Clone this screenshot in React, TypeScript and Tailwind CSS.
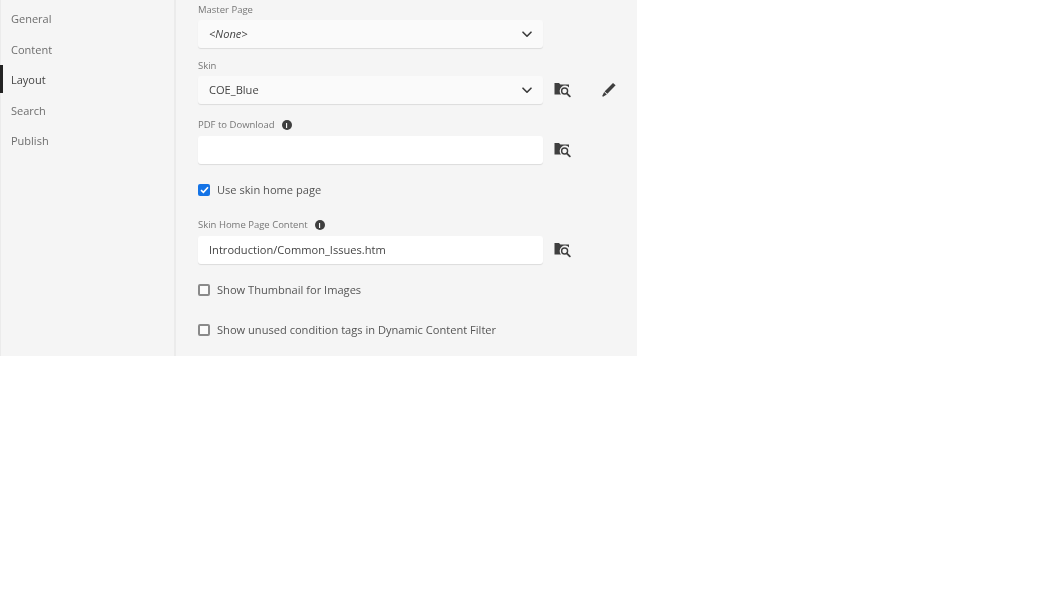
import React from "react";

const font = { fontFamily: '"Open Sans", "Noto Sans", sans-serif' };

function Chevron() {
  return (
    <svg width="10" height="7" viewBox="0 0 10 7" className="text-[#3a3a3a]">
      <path d="M1 1.2 L5 5.2 L9 1.2" fill="none" stroke="currentColor" strokeWidth="1.6" strokeLinecap="round" strokeLinejoin="round" />
    </svg>
  );
}

function FolderSearch() {
  return (
    <svg width="17" height="16" viewBox="0 0 17 16" className="text-[#3f3f3f]">
      <path d="M0.5 1 H5 L6.4 2.6 H15 V5.4 A5 5 0 0 0 7 12.5 H0.5 Z" fill="currentColor" />
      <circle cx="10.6" cy="9" r="3" fill="none" stroke="currentColor" strokeWidth="1.4" />
      <path d="M12.8 11.3 L15.8 14.4" stroke="currentColor" strokeWidth="1.8" strokeLinecap="round" />
    </svg>
  );
}

function Pencil() {
  return (
    <svg width="16" height="16" viewBox="0 0 16 16" className="text-[#3f3f3f]">
      <path d="M12 1 L14.6 3.2 L6.4 11.8 L3.6 9.4 Z" fill="currentColor" />
      <path d="M3.2 10 L5.8 12.4 L2 14.8 L1.2 14 Z" fill="currentColor" />
    </svg>
  );
}

function Info() {
  return (
    <span className="ml-[7px] flex h-[10px] w-[10px] items-center justify-center rounded-full bg-[#3f3f3f] text-[7px] font-bold leading-none text-white">
      i
    </span>
  );
}

function Field({ text, italic, select, folder, pencil, white }: {
  text?: string;
  italic?: boolean;
  select?: boolean;
  folder?: boolean;
  pencil?: boolean;
  white?: boolean;
}) {
  return (
    <div className="flex h-7 items-center">
      <div
        className={`flex h-7 w-[345px] items-center justify-between rounded-[3px] pl-[11px] pr-[11px] text-[11.1px] text-[#444] shadow-[0_1px_1px_rgba(0,0,0,0.1)] ${white ? "bg-white" : "bg-[#fafafa]"} ${italic ? "italic" : ""}`}
      >
        <span>{text}</span>
        {select && <Chevron />}
      </div>
      {folder && (
        <div className="ml-[11px] flex w-[17px]">
          <FolderSearch />
        </div>
      )}
      {pencil && (
        <div className="ml-[30px] flex">
          <Pencil />
        </div>
      )}
    </div>
  );
}

function Label({ children }: { children: React.ReactNode }) {
  return <div className="flex h-3 items-center text-[9.5px] leading-3 text-[#767676]">{children}</div>;
}

function Check({ label, checked }: { label: string; checked?: boolean }) {
  return (
    <div className="flex h-4 items-center gap-[7px] text-[11.1px] text-[#555]">
      {checked ? (
        <span className="flex h-3 w-3 items-center justify-center rounded-[2px] bg-[#1473e6]">
          <svg width="9" height="8" viewBox="0 0 9 8">
            <path d="M1 4.2 L3.4 6.4 L8 1.2" fill="none" stroke="#fff" strokeWidth="1.6" />
          </svg>
        </span>
      ) : (
        <span className="h-3 w-3 rounded-[2px] border-2 border-[#8a8a8a] bg-[#fafafa]" />
      )}
      <span>{label}</span>
    </div>
  );
}

export default function App() {
  const nav = ["General", "Content", "Layout", "Search", "Publish"];

  return (
    <div className="h-[592px] w-[1060px] bg-white" style={font}>
      <div className="flex h-[356px] w-[637px] overflow-hidden bg-[#f5f5f5] blur-[0.3px]">
        <aside className="h-full w-[176px] shrink-0 border-l border-r-2 border-[#ebebeb] pt-[4px]">
          {nav.map((n) => (
            <div key={n} className="relative flex h-[30.5px] items-center pl-[10px] text-[11px] text-[#6e6e6e]">
              {n === "Layout" && <span className="absolute -left-px top-0 h-[28px] w-[3px] bg-[#222]" />}
              <span className={n === "Layout" ? "text-[#444]" : ""}>{n}</span>
            </div>
          ))}
        </aside>

        <main className="flex-1 pl-[22px] pt-[4px]">
          <Label>Master Page</Label>
          <div className="mt-[4px]">
            <Field text="<None>" italic select />
          </div>
          <div className="mt-[12px]">
            <Label>Skin</Label>
          </div>
          <div className="mt-[4px]">
            <Field text="COE_Blue" select folder pencil />
          </div>
          <div className="mt-[15px]">
            <Label>
              PDF to Download <Info />
            </Label>
          </div>
          <div className="mt-[5px]">
            <Field white folder />
          </div>
          <div className="mt-[18px]">
            <Check label="Use skin home page" checked />
          </div>
          <div className="mt-[21px]">
            <Label>
              Skin Home Page Content <Info />
            </Label>
          </div>
          <div className="mt-[5px]">
            <Field white text="Introduction/Common_Issues.htm" folder />
          </div>
          <div className="mt-[18px]">
            <Check label="Show Thumbnail for Images" />
          </div>
          <div className="mt-[24px]">
            <Check label="Show unused condition tags in Dynamic Content Filter" />
          </div>
        </main>
      </div>
    </div>
  );
}
